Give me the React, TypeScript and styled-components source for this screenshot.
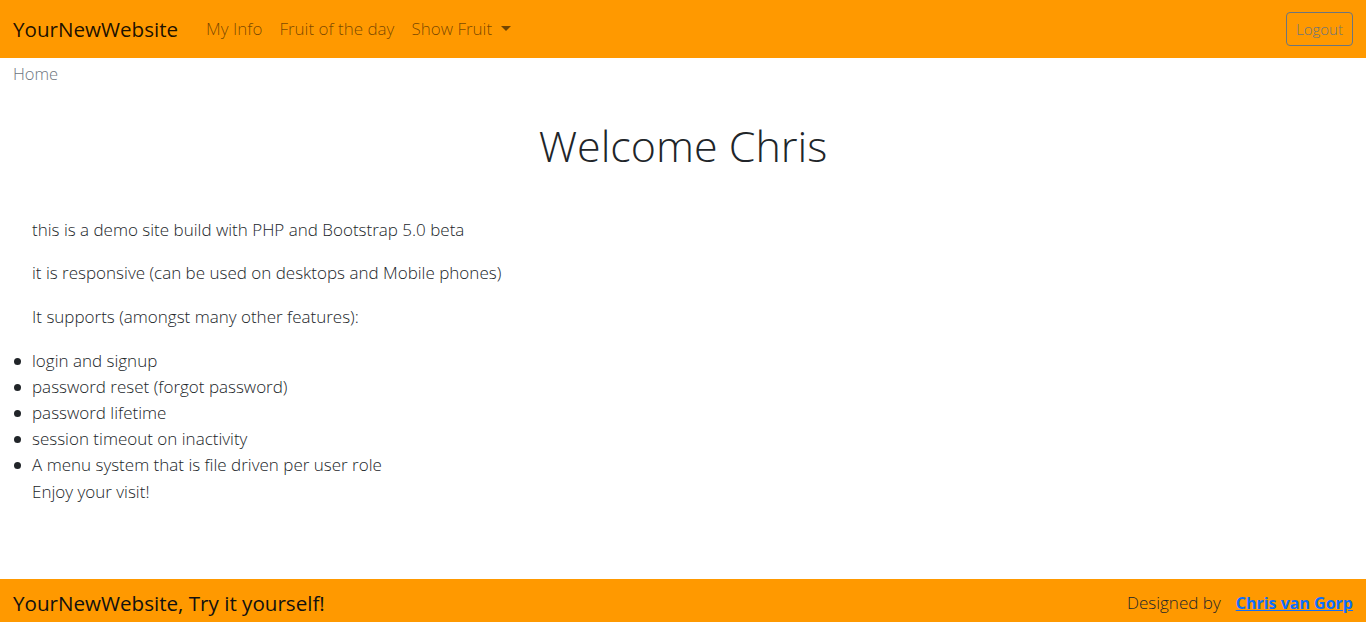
import React from "react";
import styled, { createGlobalStyle } from "styled-components";

const Global = createGlobalStyle`
  html, body { margin: 0; padding: 0; height: 100%; }
  body { font-family: "Open Sans", "Noto Sans", sans-serif; font-weight: 300; color: #212529; background: #fff; }
  #root { min-height: 100%; display: flex; flex-direction: column; }
`;

const Page = styled.div`
  min-height: 622px;
  display: flex;
  flex-direction: column;
`;

const NavBar = styled.nav`
  height: 58px;
  background: #ff9900;
  display: flex;
  align-items: center;
  padding: 0 13px 1px;
  box-sizing: border-box;
`;

const Brand = styled.a`
  font-size: 20.6px;
  font-weight: 400;
  color: rgba(0,0,0,0.9);
  margin-right: 28px;
  text-decoration: none;
`;

const NavLinks = styled.div`
  display: flex;
  align-items: center;
  gap: 17px;
  flex: 1;
`;

const NavLink = styled.a`
  font-size: 17px;
  color: rgba(0,0,0,0.55);
  text-decoration: none;
  display: flex;
  align-items: center;
`;

const Caret = styled.span`
  display: inline-block;
  margin-left: 9px;
  border-top: 5px solid rgba(0,0,0,0.55);
  border-left: 5px solid transparent;
  border-right: 5px solid transparent;
`;

const LogoutButton = styled.button`
  font-family: inherit;
  font-weight: 300;
  font-size: 15px;
  color: #6c757d;
  background: transparent;
  border: 1px solid #6c757d;
  border-radius: 4px;
  height: 34px;
  padding: 0 9px;
`;

const Crumb = styled.div`
  padding: 4px 13px 0;
  font-size: 16.5px;
  color: #6c757d;
  height: 26px;
`;

const Main = styled.main`
  flex: 1;
  padding: 0 0 0 32px;
`;

const Title = styled.h1`
  margin: 32px 0 46px -32px;
  text-align: center;
  font-size: 43px;
  font-weight: 300;
  line-height: 1.2;
`;

const Para = styled.p`
  margin: 0 0 19.5px;
  font-size: 17px;
  line-height: 24px;
`;

const List = styled.ul`
  margin: 12px 0 0;
  padding: 0;
  list-style: none;
`;

const Item = styled.li`
  position: relative;
  font-size: 17px;
  line-height: 26px;
  &::before {
    content: "";
    position: absolute;
    left: -18px;
    top: 10px;
    width: 7px;
    height: 7px;
    border-radius: 50%;
    background: #212529;
  }
`;

const Closing = styled.div`
  font-size: 17px;
  line-height: 28px;
`;

const Footer = styled.footer`
  height: 43px;
  background: #ff9900;
  display: flex;
  align-items: center;
  justify-content: space-between;
  padding: 4px 13px 0;
  box-sizing: border-box;
`;

const FooterBrand = styled.span`
  font-size: 20.6px;
  font-weight: 400;
  color: #111;
`;

const Credit = styled.span`
  font-size: 17px;
  color: #212529;
  display: flex;
  gap: 15px;
  align-items: center;
`;

const CreditLink = styled.a`
  color: #0d6efd;
  font-size: 16px;
  font-weight: 700;
  text-decoration: underline;
`;

export default function App() {
  return (
    <Page>
      <Global />
      <NavBar>
        <Brand href="#">YourNewWebsite</Brand>
        <NavLinks>
          <NavLink href="#">My Info</NavLink>
          <NavLink href="#">Fruit of the day</NavLink>
          <NavLink href="#">Show Fruit<Caret /></NavLink>
        </NavLinks>
        <LogoutButton>Logout</LogoutButton>
      </NavBar>
      <Crumb>Home</Crumb>
      <Main>
        <Title>Welcome Chris</Title>
        <Para>this is a demo site build with PHP and Bootstrap 5.0 beta</Para>
        <Para>it is responsive (can be used on desktops and Mobile phones)</Para>
        <Para>It supports (amongst many other features):</Para>
        <List>
          <Item>login and signup</Item>
          <Item>password reset (forgot password)</Item>
          <Item>password lifetime</Item>
          <Item>session timeout on inactivity</Item>
          <Item>A menu system that is file driven per user role</Item>
        </List>
        <Closing>Enjoy your visit!</Closing>
      </Main>
      <Footer>
        <FooterBrand>YourNewWebsite, Try it yourself!</FooterBrand>
        <Credit>
          Designed by
          <CreditLink href="#">Chris van Gorp</CreditLink>
        </Credit>
      </Footer>
    </Page>
  );
}
